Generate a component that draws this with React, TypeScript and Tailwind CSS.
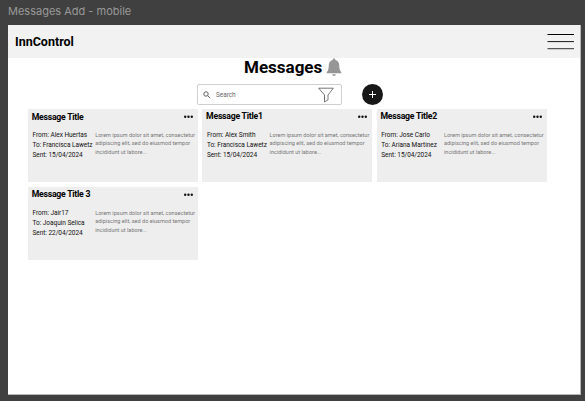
type Message = {
  title: string;
  from: string;
  to: string;
  sent: string;
  titleClass: string;
};

const messages: Message[] = [
  { title: "Message Title", from: "Alex Huertas", to: "Francisca Lawetz", sent: "15/04/2024", titleClass: "pt-[3px]" },
  { title: "Message Title1", from: "Alex Smith", to: "Francisca Lawetz", sent: "15/04/2024", titleClass: "pt-[2px]" },
  { title: "Message Title2", from: "Jose Carlo", to: "Ariana Martinez", sent: "15/04/2024", titleClass: "pt-[2px]" },
  { title: "Message Title 3", from: "Jair17", to: "Joaquin Selica", sent: "22/04/2024", titleClass: "pt-[2px]" },
];

function Card({ m }: { m: Message }) {
  return (
    <article className="h-[73px] w-[170px] overflow-hidden whitespace-nowrap bg-[#eeeeee]">
      <div className="flex h-[15px] justify-between pr-[5px] pl-[3.7px]">
        <h2 className={`text-[8.7px] leading-[10px] font-bold tracking-[-0.25px] text-black ${m.titleClass}`}>{m.title}</h2>
        <svg className="mt-[6px] h-[4px] w-[9px]" viewBox="0 0 9 4" fill="#111">
          <circle cx="1.2" cy="1.8" r="1.2" />
          <circle cx="4.5" cy="1.8" r="1.2" />
          <circle cx="7.8" cy="1.8" r="1.2" />
        </svg>
      </div>
      <div className="flex pt-[6px] pl-[4.5px]">
        <div className="w-[62.7px] pt-[1px] text-[6.5px] leading-[9.75px] tracking-[-0.04px] text-[#111]">
          <p>From: {m.from}</p>
          <p>To: {m.to}</p>
          <p>Sent: {m.sent}</p>
        </div>
        <p className="pt-[1px] text-[5.55px] leading-[8.4px] text-[#777]">
          Lorem ipsum dolor sit amet, consectetur
          <br />
          adipiscing elit, sed do eiusmod tempor
          <br />
          incididunt ut labore...
        </p>
      </div>
    </article>
  );
}

export default function App() {
  return (
    <div className="h-[401px] w-[585px] overflow-hidden bg-[#404040] pl-[8px] font-['Roboto',sans-serif]">
      <div className="h-[25px] pt-[4px] font-['Inter',sans-serif] text-[11px] leading-[15px] whitespace-nowrap text-[#999]">
        Messages Add - mobile
      </div>
      <main className="h-[370px] w-[573px] border-r border-b border-[#b5b8b7] bg-white">
        <header className="flex h-[33px] justify-between bg-[#f2f2f2] pr-[6px] pl-[7px]">
          <span className="pt-[8px] text-[12.5px] leading-[17px] font-bold text-black">InnControl</span>
          <svg className="mt-[8px] h-[18px] w-[27px]" viewBox="0 0 27 18">
            <path d="M.5 1.500h26.500" stroke="#000" />
            <path d="M.5 8.600h26.500" stroke="#181818" />
            <path d="M.5 15.700h26.500" stroke="#333" />
          </svg>
        </header>
        <div className="flex h-[26px] pl-[236px]">
          <h1 className="-mt-px w-[82px] text-[17px] leading-[20px] font-bold whitespace-nowrap text-black">Messages</h1>
          <svg className="h-[19px] w-[16px]" viewBox="0 0 16 19" fill="#969696">
            <path d="M8 .4c.9 0 1.4.6 1.4 1.5 2.6.7 3.8 2.7 3.8 5.2 0 4 .7 5.7 2.1 7.1v1.1H.7v-1.100c1.400-1.400 2.100-3.100 2.100-7.100 0-2.500 1.200-4.500 3.800-5.200C6.600 1 7.100.4 8 .4Z" />
            <path d="M6.200 16.200h3.600a1.800 1.800 0 0 1-3.600 0Z" />
          </svg>
        </div>
        <div className="flex h-[25px] items-start pl-[189px]">
          <div className="flex h-[21px] w-[145px] items-center rounded-[2px] border border-[#d0d0d0] pr-[7px] pl-[5px]">
            <svg className="h-[8px] w-[8px]" viewBox="0 0 8 8" fill="none" stroke="#555" strokeWidth="0.9">
              <circle cx="3" cy="3" r="2.2" />
              <path d="m4.700 4.700 2.500 2.500" />
            </svg>
            <span className="flex-1 pt-[1px] pl-[5px] text-[6.4px] leading-[9px] text-[#666]">Search</span>
            <svg className="h-[16px] w-[16px]" viewBox="0 0 16 16" fill="none" stroke="#666" strokeWidth="0.9">
              <path d="M.7 1.200h14.600L10 8v4.800L6.500 15V8Z" />
            </svg>
          </div>
          <div className="ml-[20px] flex h-[21px] w-[21px] items-center justify-center rounded-full bg-[#171717]">
            <svg className="h-[7px] w-[7px]" viewBox="0 0 7 7" stroke="#fff">
              <path d="M3.500 0v7M0 3.500h7" />
            </svg>
          </div>
        </div>
        <section className="grid grid-cols-[170px_170px_170px] gap-x-[4.4px] gap-y-[5px] pl-[20px]">
          {messages.map((m) => (
            <Card key={m.title} m={m} />
          ))}
        </section>
      </main>
    </div>
  );
}
